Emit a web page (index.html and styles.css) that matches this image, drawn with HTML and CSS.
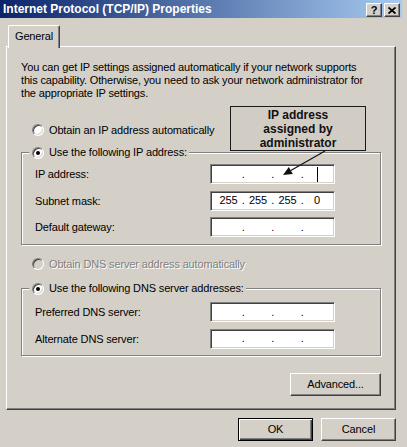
FILE: index.html
```html
<!DOCTYPE html>
<html lang="en">
<head>
    <meta charset="UTF-8">
    <meta name="viewport" content="width=device-width, initial-scale=1.0">
    <title>Internet Protocol (TCP/IP) Properties</title>
    <link rel="stylesheet" href="styles.css">
</head>
<body>

    <div class="window">
        <div class="titlebar">
            <span class="caption">Internet Protocol (TCP/IP) Properties</span>
            <div class="caption-buttons">
                <span class="cap-btn help">?</span>
                <span class="cap-btn close">
                    <svg width="8" height="7" viewBox="0 0 8 7"><path d="M0.5 0.5 L7.5 6.5 M7.5 0.5 L0.5 6.5" stroke="#000" stroke-width="1.8"/></svg>
                </span>
            </div>
        </div>

        <div class="tabs"><span class="tab">General</span></div>

        <div class="panel">
            <p class="intro">You can get IP settings assigned automatically if your network supports<br>this capability. Otherwise, you need to ask your network administrator for<br>the appropriate IP settings.</p>

            <div class="option first"><span class="radio"></span>Obtain an IP address automatically</div>

            <div class="group ip-group">
                <div class="group-title option"><span class="radio checked"></span>Use the following IP address:</div>
                <div class="fields">
                    <div class="field-row">
                        <span>IP address:</span>
                        <div class="ip-box">
                            <span class="octet"></span><span class="dot">.</span>
                            <span class="octet"></span><span class="dot">.</span>
                            <span class="octet"></span><span class="dot">.</span>
                            <span class="octet"><span class="caret"></span></span>
                        </div>
                    </div>
                    <div class="field-row">
                        <span>Subnet mask:</span>
                        <div class="ip-box">
                            <span class="octet">255</span><span class="dot">.</span>
                            <span class="octet">255</span><span class="dot">.</span>
                            <span class="octet">255</span><span class="dot">.</span>
                            <span class="octet">0</span>
                        </div>
                    </div>
                    <div class="field-row">
                        <span>Default gateway:</span>
                        <div class="ip-box">
                            <span class="octet"></span><span class="dot">.</span>
                            <span class="octet"></span><span class="dot">.</span>
                            <span class="octet"></span><span class="dot">.</span>
                            <span class="octet"></span>
                        </div>
                    </div>
                </div>
            </div>

            <div class="option first disabled"><span class="radio"></span>Obtain DNS server address automatically</div>

            <div class="group dns-group">
                <div class="group-title option"><span class="radio checked"></span>Use the following DNS server addresses:</div>
                <div class="fields">
                    <div class="field-row">
                        <span>Preferred DNS server:</span>
                        <div class="ip-box">
                            <span class="octet"></span><span class="dot">.</span>
                            <span class="octet"></span><span class="dot">.</span>
                            <span class="octet"></span><span class="dot">.</span>
                            <span class="octet"></span>
                        </div>
                    </div>
                    <div class="field-row">
                        <span>Alternate DNS server:</span>
                        <div class="ip-box">
                            <span class="octet"></span><span class="dot">.</span>
                            <span class="octet"></span><span class="dot">.</span>
                            <span class="octet"></span><span class="dot">.</span>
                            <span class="octet"></span>
                        </div>
                    </div>
                </div>
            </div>

            <div class="panel-actions">
                <button class="btn advanced">Advanced...</button>
            </div>
        </div>

        <div class="dialog-actions">
            <button class="btn default">OK</button>
            <button class="btn">Cancel</button>
        </div>

        <!-- note pointing at the IP address box -->
        <div class="callout">IP address<br>assigned by<br>administrator</div>
        <svg class="callout-arrow" width="70" height="40" viewBox="0 0 70 40">
            <line x1="55" y1="6" x2="20.8" y2="25.5" stroke="#111" stroke-width="1.2"/>
            <polygon points="13,30 22.8,29 18.8,22" fill="#111"/>
        </svg>
    </div>

</body>
</html>
```

FILE: styles.css
```css
* {
    box-sizing: border-box;
}
body {
    margin: 0;
    background-color: #D4D0C8;
    font-family: "Liberation Sans", Arial, sans-serif;
    font-size: 11px;
    letter-spacing: -0.15px;
    color: #000;
}
.window {
    position: relative;
    width: 407px;
    height: 447px;
    background: #D4D0C8;
    overflow: hidden;
}

/* title bar */
.titlebar {
    display: flex;
    justify-content: space-between;
    height: 18px;
    margin-right: 5px;
    padding: 0 2px 0 3px;
    background: linear-gradient(to right, #0A246A, #A6CAF0);
}
.caption {
    color: white;
    font-weight: bold;
    font-size: 12px;
    letter-spacing: 0;
    line-height: 19px;
}
.caption-buttons {
    display: flex;
    gap: 2px;
    padding-top: 3px;
}
.cap-btn {
    display: flex;
    align-items: center;
    justify-content: center;
    width: 16px;
    height: 14px;
    background: #D4D0C8;
    border-top: 1px solid #fff;
    border-left: 1px solid #fff;
    border-right: 1px solid #404040;
    border-bottom: 1px solid #404040;
    box-shadow: inset -1px -1px 0 #808080;
}
.help {
    font-weight: bold;
    font-size: 11px;
    line-height: 11px;
}

/* tab strip */
.tabs {
    display: flex;
    height: 21px;
    margin: 7px 0 0 8px;
}
.tab {
    position: relative;
    z-index: 1;
    height: 23px;
    padding: 4px 6px 0 6px;
    line-height: 13px;
    background: #D4D0C8;
    border-top: 1px solid #fff;
    border-left: 1px solid #fff;
    border-right: 1px solid #404040;
    border-radius: 2px 2px 0 0;
    box-shadow: inset -1px 0 0 #808080;
}
.panel {
    width: 390px;
    margin-left: 6px;
    padding: 14px 14px 13px 14px;
    border: 1px solid;
    border-color: #fff #404040 #404040 #fff;
    box-shadow: inset -1px -1px 0 #808080;
}
.intro {
    margin: 0;
    line-height: 13px;
    white-space: nowrap;
}

/* radio options */
.option {
    display: flex;
    align-items: center;
    gap: 5px;
    height: 13px;
    line-height: 13px;
    white-space: nowrap;
}
.option.first {
    margin: 23.5px 0 0 11px;
}
.option.disabled {
    margin-top: 12.5px;
    color: #808080;
    text-shadow: 1px 1px 0 #fff;
}
.radio {
    display: inline-flex;
    align-items: center;
    justify-content: center;
    flex: none;
    width: 12px;
    height: 12px;
    border-radius: 50%;
    background: #fff;
    border: 1px solid;
    border-color: #808080 #fff #fff #808080;
    box-shadow: inset 1px 1px 0 #404040, inset -1px -1px 0 #D4D0C8;
}
.disabled .radio {
    background: #D4D0C8;
}
.radio.checked::after {
    content: "";
    width: 4px;
    height: 4px;
    border-radius: 50%;
    background: #000;
}

/* etched group boxes */
.group {
    padding: 0 45px 7px 13px;
    border: 1px solid #808080;
    box-shadow: inset 1px 1px 0 #fff, 1px 1px 0 #fff;
}
.ip-group {
    margin-top: 15.5px;
}
.dns-group {
    margin-top: 17.5px;
    padding-bottom: 6px;
}
.group-title {
    width: fit-content;
    margin: -7px 0 0 -6px;
    padding: 0 2px 0 3px;
    background: #D4D0C8;
}
.fields {
    display: flex;
    flex-direction: column;
    gap: 6.5px;
    padding-top: 5px;
}
.dns-group .fields {
    padding-top: 7px;
}
.field-row {
    display: flex;
    justify-content: space-between;
    align-items: center;
    height: 20px;
}
.ip-box {
    display: flex;
    align-items: center;
    width: 125px;
    height: 20px;
    padding-left: 5px;
    background: #fff;
    border: 1px solid;
    border-color: #808080 #fff #fff #808080;
    box-shadow: inset 1px 1px 0 #404040, inset -1px -1px 0 #D4D0C8;
}
.octet {
    display: flex;
    justify-content: center;
    width: 25px;
    line-height: 13px;
}
.dot {
    width: 4.5px;
    text-align: center;
    line-height: 13px;
}
.caret {
    width: 1px;
    height: 15px;
    background: #000;
}

/* buttons */
.panel-actions {
    display: flex;
    justify-content: flex-end;
    margin-top: 17px;
}
.dialog-actions {
    display: flex;
    justify-content: flex-end;
    gap: 8px;
    margin-top: 8px;
    padding-right: 11px;
}
.btn {
    width: 75px;
    height: 23px;
    padding: 0;
    font-family: inherit;
    font-size: 11px;
    letter-spacing: -0.15px;
    color: #000;
    background: #D4D0C8;
    border: 1px solid;
    border-color: #fff #404040 #404040 #fff;
    box-shadow: inset -1px -1px 0 #808080;
}
.btn.advanced {
    width: 91px;
}
.btn.default {
    border: 1px solid #000;
    box-shadow: inset 1px 1px 0 #fff, inset -1px -1px 0 #404040, inset -2px -2px 0 #808080;
}

/* annotation */
.callout {
    position: absolute;
    left: 230px;
    top: 106px;
    width: 136px;
    height: 45px;
    padding-top: 1px;
    border: 1px solid #1a1a1a;
    background: #D1CDC5;
    font-weight: bold;
    font-size: 12px;
    letter-spacing: 0;
    line-height: 14px;
    text-align: center;
    color: #111;
}
.callout-arrow {
    position: absolute;
    left: 270px;
    top: 145px;
}
```
